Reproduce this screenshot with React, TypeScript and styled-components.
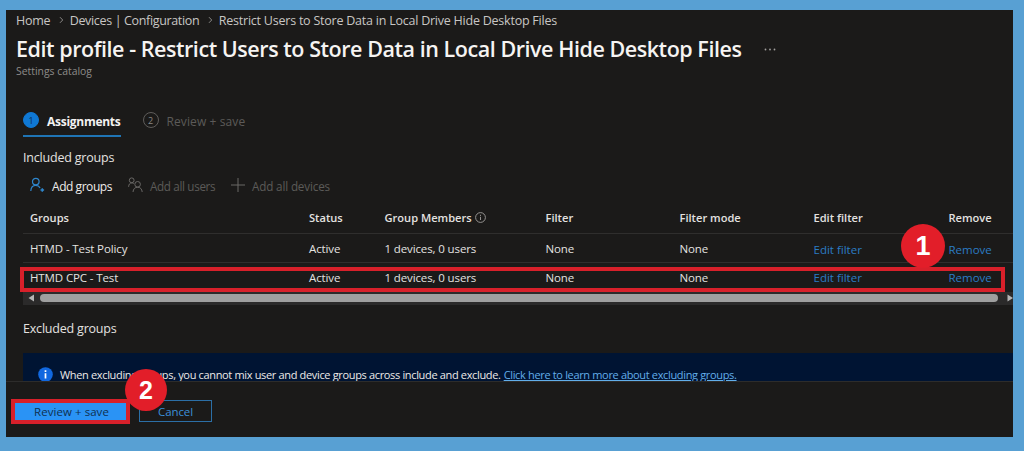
import React from "react";
import styled, { createGlobalStyle } from "styled-components";

const GlobalStyle = createGlobalStyle`
  * { box-sizing: border-box; }
  body {
    margin: 0;
    background: #58a0d3;
    font-family: "Open Sans", "Noto Sans", sans-serif;
    font-size: 11.5px;
    color: #e4e2e0;
  }
`;

const Desktop = styled.div`
  width: 1024px;
  height: 451px;
  padding: 10px 11px 14px 6px;
  background: #58a0d3;
  overflow: hidden;
`;

const Blade = styled.main`
  position: relative;
  width: 1007px;
  height: 427px;
  display: flex;
  flex-direction: column;
  background: #1b1a19;
  overflow: hidden;
  white-space: nowrap;
`;

const Label = styled.span<{ $ls?: number }>`
  letter-spacing: ${(p) => p.$ls ?? 0}px;
`;

const Breadcrumb = styled.nav`
  height: 21px;
  padding-left: 10px;
  display: flex;
  align-items: center;
  font-size: 12.5px;
  color: #c8c6c4;
  svg { margin: 0 5.6px 0 9px; position: relative; top: -1px; }
`;

const TitleRow = styled.header`
  height: 34px;
  padding: 2px 0 0 10px;
  display: flex;
  align-items: center;
`;

const Title = styled.h1`
  margin: 0;
  font-size: 21.5px;
  font-weight: 600;
  line-height: 32px;
  letter-spacing: -0.45px;
  color: #f6f4f2;
`;

const More = styled.svg`
  margin-left: 23px;
`;

const Subtitle = styled.div`
  height: 12px;
  padding-left: 10px;
  line-height: 12px;
  font-size: 10.4px;
  color: #8e8c8a;
`;

const Steps = styled.div`
  flex: none;
  margin-top: 30px;
  padding-left: 17px;
  height: 30px;
  display: flex;
  gap: 22px;
`;

const Step = styled.div<{ $active?: boolean }>`
  height: 30px;
  display: flex;
  align-items: center;
  gap: 8px;
  font-size: 12px;
  font-weight: ${(p) => (p.$active ? 700 : 400)};
  color: ${(p) => (p.$active ? "#f3f2f1" : "#5c5a58")};
  border-bottom: 2px solid ${(p) => (p.$active ? "#1f74b4" : "transparent")};
`;

const StepDot = styled.span<{ $active?: boolean }>`
  width: 16px;
  height: 16px;
  border-radius: 50%;
  display: flex;
  align-items: center;
  justify-content: center;
  font-size: 9px;
  font-weight: 400;
  position: relative;
  top: -1px;
  background: ${(p) => (p.$active ? "#0f78d4" : "transparent")};
  border: 1px solid ${(p) => (p.$active ? "#0f78d4" : "#5f5d5b")};
  color: ${(p) => (p.$active ? "#0b2f52" : "#8a8886")};
`;

const SectionTitle = styled.h2<{ $top: number }>`
  flex: none;
  margin: ${(p) => p.$top}px 0 0 17px;
  height: 20px;
  line-height: 21px;
  font-size: 12.5px;
  font-weight: 400;
  letter-spacing: -0.2px;
  color: #e4e2e0;
`;

const Toolbar = styled.div`
  flex: none;
  margin-top: 9px;
  height: 20px;
  padding-left: 24px;
  display: flex;
  align-items: center;
`;

const Command = styled.button<{ $enabled?: boolean; $w?: number }>`
  padding: 0;
  border: 0;
  background: none;
  font: inherit;
  width: ${(p) => (p.$w ? `${p.$w}px` : "auto")};
  display: flex;
  align-items: center;
  font-size: ${(p) => (p.$enabled ? 12 : 11.7)}px;
  font-weight: ${(p) => (p.$enabled ? 500 : 400)};
  color: ${(p) => (p.$enabled ? "#eeecea" : "#5c5a58")};
`;

const CommandIcon = styled.svg<{ $gap: number }>`
  margin-right: ${(p) => p.$gap}px;
  position: relative;
  top: -1px;
  fill: none;
  flex: none;
`;

const Grid = styled.div`
  flex: none;
  margin-left: 17px;
`;

const GridRow = styled.div<{ $h: number; $head?: boolean; $last?: boolean }>`
  height: ${(p) => p.$h}px;
  display: grid;
  grid-template-columns: 279px 75.5px 161px 134px 134px 135px 60px;
  align-items: center;
  padding: ${(p) => (p.$head ? 6 : 0)}px 0 0 7px;
  font-size: ${(p) => (p.$head ? 11.1 : 11.5)}px;
  font-weight: ${(p) => (p.$head ? 600 : 400)};
  letter-spacing: ${(p) => (p.$head ? 0 : -0.12)}px;
  border-bottom: ${(p) => (p.$last ? 0 : 1)}px solid #2f2e2d;
`;

const Cell = styled.div`
  display: flex;
  align-items: center;
`;

const CellLink = styled.a<{ $drop?: number }>`
  padding-top: ${(p) => p.$drop ?? 0}px;
  letter-spacing: 0;
  color: #2b7cc4;
`;

const InfoRing = styled.svg`
  margin-left: 3px;
`;

const ScrollTrack = styled.div`
  flex: none;
  margin-left: 17px;
  height: 13px;
  display: flex;
  align-items: center;
  padding: 0 0 1px 5px;
  background: #2b2a2a;
`;

const Thumb = styled.div`
  flex: none;
  width: 958px;
  height: 8px;
  margin: 0 9px 0 6px;
  border-radius: 4px;
  background: #9f9f9f;
`;

const Arrow = styled.svg`
  fill: #b5b5b5;
  flex: none;
`;

const Banner = styled.div`
  flex: none;
  margin: 15px 0 0 17px;
  height: 28px;
  padding: 13px 0 0 15px;
  display: flex;
  align-items: flex-start;
  overflow: hidden;
  background: #001433;
  color: #eceae8;
  font-size: 11px;
  letter-spacing: -0.34px;
  line-height: 17px;
  svg { margin: 1px 7px 0 0; flex: none; }
`;

const BannerLink = styled.a`
  margin-left: 3px;
  color: #62aeea;
  text-decoration: underline;
`;

const Footer = styled.footer`
  flex: 1;
  border-top: 1px solid #2d2c2b;
  padding: 17px 0 0 5px;
  display: flex;
  align-items: flex-start;
  gap: 9px;
`;

const ReviewFrame = styled.div`
  padding: 4px;
  width: 119px;
  height: 25px;
  background: #d8202a;
`;

const PrimaryButton = styled.button`
  display: block;
  width: 111px;
  height: 17px;
  padding: 0 0 0 2px;
  border: 0;
  background: #2a93f5;
  color: #10304f;
  font: inherit;
  letter-spacing: 0.05px;
  line-height: 17px;
`;

const SecondaryButton = styled.button`
  margin-top: 1px;
  width: 73px;
  height: 22px;
  padding: 0;
  border: 1px solid #2c6fa6;
  background: transparent;
  color: #3b8fd8;
  font: inherit;
  letter-spacing: -0.1px;
  line-height: 19px;
`;

const Highlight = styled.div`
  position: absolute;
  left: 14px;
  top: 257px;
  width: 985px;
  height: 25px;
  border: 4px solid #d8202a;
`;

const Callout = styled.div<{ $x: number; $y: number; $d: number; $size: number }>`
  position: absolute;
  left: ${(p) => p.$x}px;
  top: ${(p) => p.$y}px;
  width: ${(p) => p.$d}px;
  height: ${(p) => p.$d}px;
  border-radius: 50%;
  background: #e21e29;
  color: #fff;
  font: 700 ${(p) => p.$size}px/${(p) => p.$d}px "Liberation Sans", sans-serif;
  text-align: center;
`;

const Chevron = () => (
  <svg width="5" height="8" viewBox="0 0 5 8" fill="none" stroke="#8a8886">
    <path d="M1 1.2 3.7 4 1 6.8" />
  </svg>
);

const groups = [
  { name: "HTMD - Test Policy", drop: 3 },
  { name: "HTMD CPC - Test", drop: 0 },
];

export default function App() {
  return (
    <Desktop>
      <GlobalStyle />
      <Blade>
        <Breadcrumb>
          <Label $ls={-0.3}>Home</Label>
          <Chevron />
          <Label $ls={-0.35}>Devices | Configuration</Label>
          <Chevron />
          <Label $ls={-0.23}>Restrict Users to Store Data in Local Drive Hide Desktop Files</Label>
        </Breadcrumb>
        <TitleRow>
          <Title>Edit profile - Restrict Users to Store Data in Local Drive Hide Desktop Files</Title>
          <More width="12" height="3" fill="#a19f9d">
            <circle cx="1.5" cy="1.5" r="0.9" />
            <circle cx="6" cy="1.5" r="0.9" />
            <circle cx="10.5" cy="1.5" r="0.9" />
          </More>
        </TitleRow>
        <Subtitle>Settings catalog</Subtitle>

        <Steps>
          <Step $active>
            <StepDot $active>1</StepDot>
            <Label $ls={-0.27}>Assignments</Label>
          </Step>
          <Step>
            <StepDot>2</StepDot>
            <Label $ls={0.1}>Review + save</Label>
          </Step>
        </Steps>

        <SectionTitle $top={10}>Included groups</SectionTitle>
        <Toolbar>
          <Command $enabled $w={98}>
            <CommandIcon $gap={6} width="16" height="16" viewBox="0 0 16 16" stroke="#2f86cc" strokeWidth="1.2">
              <circle cx="5.8" cy="4.6" r="3.3" />
              <path d="M0.8 14c.2-3.6 2.3-5.6 5-5.6 2 0 3.4.9 4.3 2.5" />
              <path d="M12.3 11.2v3.6M10.5 13h3.6" strokeWidth="1.5" />
            </CommandIcon>
            <Label $ls={-0.45}>Add groups</Label>
          </Command>
          <Command $w={103}>
            <CommandIcon $gap={7} width="15" height="16" viewBox="0 0 15 16" stroke="#6a6866">
              <circle cx="3.7" cy="3.3" r="2.4" />
              <path d="M.6 9.8C.7 7.3 1.9 5.9 3.9 5.9c.8 0 1.4.2 1.9.6" />
              <circle cx="9.6" cy="7.3" r="2.8" />
              <path d="M5 15c.2-3 2-4.8 4.6-4.8S14 12 14.2 15" />
            </CommandIcon>
            <Label $ls={-0.35}>Add all users</Label>
          </Command>
          <Command>
            <CommandIcon $gap={7} width="14" height="14" viewBox="0 0 14 14" stroke="#6a6866">
              <path d="M7 0v14M0 7h14" />
            </CommandIcon>
            <Label $ls={-0.16}>Add all devices</Label>
          </Command>
        </Toolbar>

        <Grid>
          <GridRow $h={38} $head>
            <Cell>Groups</Cell>
            <Cell>Status</Cell>
            <Cell>
              Group Members
              <InfoRing width="11" height="11" viewBox="0 0 11 11" fill="none" stroke="#a19f9d" strokeWidth="0.9">
                <circle cx="5.5" cy="5.5" r="4.9" />
                <path d="M5.5 4.8v3.2M5.5 2.8v1.1" />
              </InfoRing>
            </Cell>
            <Cell>Filter</Cell>
            <Cell>Filter mode</Cell>
            <Cell>Edit filter</Cell>
            <Cell>Remove</Cell>
          </GridRow>
          {groups.map((g, i) => (
            <GridRow key={g.name} $h={29} $last={i === groups.length - 1}>
              <Cell>{g.name}</Cell>
              <Cell>Active</Cell>
              <Cell>1 devices, 0 users</Cell>
              <Cell>None</Cell>
              <Cell>None</Cell>
              <Cell><CellLink $drop={g.drop}>Edit filter</CellLink></Cell>
              <Cell><CellLink $drop={g.drop}>Remove</CellLink></Cell>
            </GridRow>
          ))}
        </Grid>
        <ScrollTrack>
          <Arrow width="6" height="8"><path d="M6 0.5v7L0.5 4z" /></Arrow>
          <Thumb />
          <Arrow width="6" height="8"><path d="M0.5 0.5v7L6 4z" /></Arrow>
        </ScrollTrack>

        <SectionTitle $top={13}>Excluded groups</SectionTitle>
        <Banner>
          <svg width="15" height="15" viewBox="0 0 15 15">
            <circle cx="7.5" cy="7.5" r="7.3" fill="#1168e0" />
            <path d="M7.5 6.3v5.2M7.5 3.2v1.8" stroke="#fff" strokeWidth="1.7" />
          </svg>
          <Label $ls={-0.34}>When excluding groups, you cannot mix user and device groups across include and exclude.</Label>
          <BannerLink>Click here to learn more about excluding groups.</BannerLink>
        </Banner>
        <Footer>
          <ReviewFrame>
            <PrimaryButton>Review + save</PrimaryButton>
          </ReviewFrame>
          <SecondaryButton>Cancel</SecondaryButton>
        </Footer>

        <Highlight />
        <Callout $x={895} $y={214} $d={44} $size={27}>1</Callout>
        <Callout $x={119} $y={359} $d={42} $size={25}>2</Callout>
      </Blade>
    </Desktop>
  );
}
